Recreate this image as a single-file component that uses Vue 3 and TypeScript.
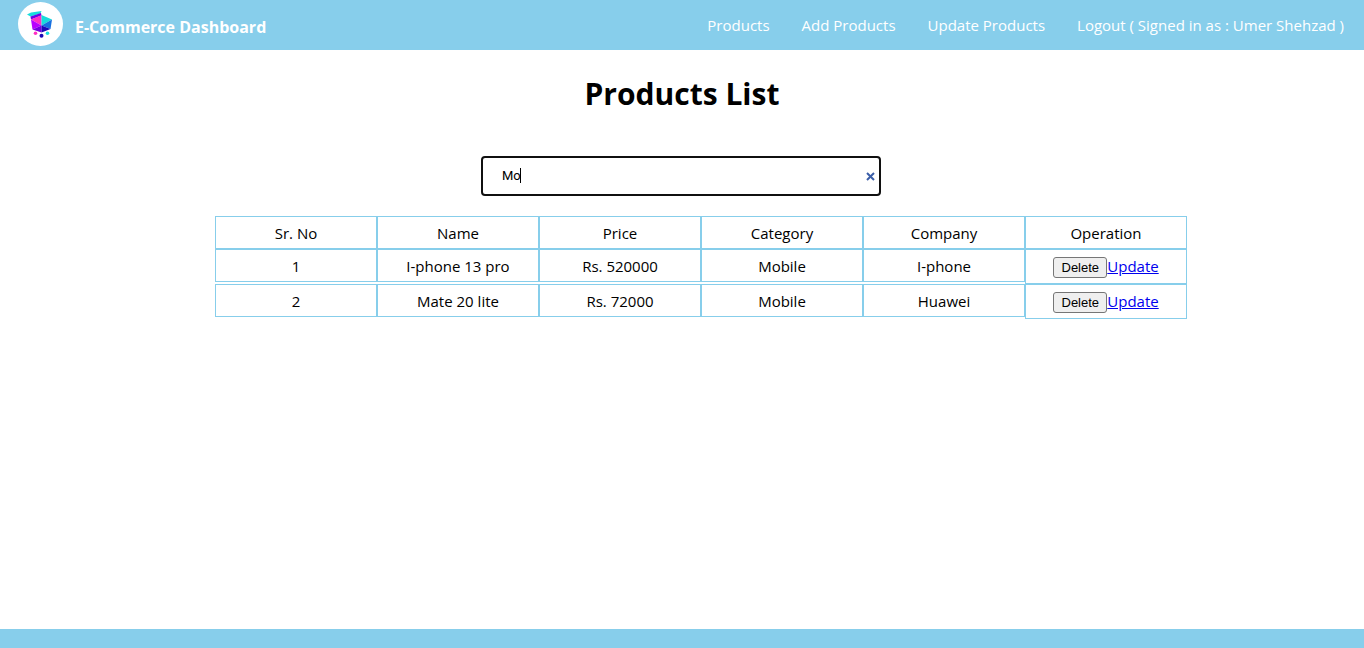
<script setup lang="ts">
import { computed, ref } from 'vue'

interface Product {
  id: number
  name: string
  price: number
  category: string
  company: string
}

const links = ['Products', 'Add Products', 'Update Products', 'Logout ( Signed in as : Umer Shehzad )']
const headings = ['Sr. No', 'Name', 'Price', 'Category', 'Company', 'Operation']
const search = ref('Mo')
const products = ref<Product[]>([
  { id: 1, name: 'I-phone 13 pro', price: 520000, category: 'Mobile', company: 'I-phone' },
  { id: 2, name: 'Mate 20 lite', price: 72000, category: 'Mobile', company: 'Huawei' },
])

const shown = computed(() => {
  const key = search.value.toLowerCase()
  return products.value.filter((p) => [p.name, p.category, p.company].some((v) => v.toLowerCase().includes(key)))
})

function remove(id: number): void {
  products.value = products.value.filter((p) => p.id !== id)
}
</script>

<template>
  <div class="page">
    <header class="bar">
      <svg class="logo" viewBox="0 0 45 44" aria-hidden="true">
        <ellipse cx="22.5" cy="22" rx="22.5" ry="22" fill="#fff" />
        <path d="M9 12.500 13 10.500 23.500 9 22.500 11.500 12.500 14.500Z" fill="#18dcdc" />
        <path d="M12.500 14.500 23 11 23.500 13.500 13 17.500Z" fill="#6a00e8" />
        <path d="M13 17.500 23.500 13 23.500 23.500Z" fill="#ff2fc4" />
        <path d="M13 17.500 23.500 23.500 14.500 27.500Z" fill="#b800ff" />
        <path d="M23.500 13 34 17.500 23.500 23.500Z" fill="#18dcdc" />
        <path d="M34 17.500 32.500 27 23.500 23.500Z" fill="#1670e0" />
        <path d="M14.500 27.500 23.500 23.500 23.500 30.500Z" fill="#7600e0" />
        <path d="M23.500 23.500 32.500 27 23.500 30.500Z" fill="#1a08b8" />
        <circle cx="17.500" cy="31.300" r="1.800" fill="#ff2fc4" />
        <circle cx="23.500" cy="33.700" r="2" fill="#1a08b8" />
        <circle cx="29.500" cy="31.300" r="1.800" fill="#18dcdc" />
      </svg>
      <span class="brand">E-Commerce Dashboard</span>
      <nav class="nav">
        <a v-for="link in links" :key="link" href="#">{{ link }}</a>
      </nav>
    </header>

    <main class="content">
      <h1>Products List</h1>
      <div class="search">
        <input v-model="search" type="text" aria-label="Search products" />
        <span class="caret" aria-hidden="true"></span>
        <button class="clear" type="button" aria-label="Clear search" @click="search = ''">
          <svg viewBox="0 0 9 9" width="9" height="9">
            <path d="M1 1 8 8M8 1 1 8" fill="none" stroke="#3b5ea8" stroke-width="2" />
          </svg>
        </button>
      </div>
      <table class="list">
        <thead>
          <tr>
            <th v-for="h in headings" :key="h" scope="col">{{ h }}</th>
          </tr>
        </thead>
        <tbody>
          <tr v-for="(p, i) in shown" :key="p.id">
            <td>{{ i + 1 }}</td>
            <td>{{ p.name }}</td>
            <td>Rs. {{ p.price }}</td>
            <td>{{ p.category }}</td>
            <td>{{ p.company }}</td>
            <td class="ops"><button type="button" @click="remove(p.id)">Delete</button><a href="#">Update</a></td>
          </tr>
        </tbody>
      </table>
    </main>
    <footer class="foot"></footer>
  </div>
</template>

<style>
body {
  margin: 0;
  background: #fff;
}
</style>

<style scoped>
.page {
  display: flex;
  flex-direction: column;
  min-height: 100vh;
  font: 16px/21px "Segoe UI", "Open Sans", "Noto Sans", sans-serif;
  color: #000;
}
.bar {
  display: flex;
  align-items: center;
  box-sizing: border-box;
  min-height: 50px;
  padding: 0 20px 0 18px;
  background: skyblue;
  color: #fff;
}
.logo {
  width: 45px;
  height: 44px;
  margin: 2px 12px 4px 0;
}
.brand {
  padding-top: 4px;
  font-size: 16px;
  font-weight: 700;
}
.nav {
  display: flex;
  flex-wrap: wrap;
  gap: 32px;
  margin-left: auto;
  font-size: 15px;
}
.nav a {
  color: #fff;
  text-decoration: none;
}
.content {
  display: flex;
  flex: 1;
  flex-direction: column;
  align-items: center;
}
h1 {
  margin: 22px 0 40px;
  font-size: 30px;
  line-height: 44px;
}
.search {
  position: relative;
  width: 400px;
  max-width: 100%;
  margin-right: 2px;
}
input {
  display: block;
  box-sizing: border-box;
  width: 100%;
  height: 40px;
  padding: 0 30px 2px 19px;
  border: 2px solid #101010;
  border-radius: 4px;
  outline: 0;
  background: #fff;
  color: #000;
  font: 13px Roboto, sans-serif;
  caret-color: transparent;
}
.caret {
  position: absolute;
  top: 12px;
  left: 39px;
  width: 1px;
  height: 15px;
  background: #000;
}
.clear {
  position: absolute;
  top: 16px;
  right: 6px;
  display: flex;
  padding: 0;
  border: 0;
  background: none;
}
.list {
  display: block;
  margin: 20px 0 20px 38px;
  font-size: 15px;
}
.list thead,
.list tbody {
  display: block;
}
.list tr {
  display: flex;
  align-items: flex-start;
}
.list th,
.list td {
  box-sizing: border-box;
  width: 162px;
  padding: 6px 5px 4px;
  border: 1px solid skyblue;
  font-weight: 400;
  text-align: center;
}
.list .ops {
  display: flex;
  justify-content: center;
  padding: 7px 5px 5px;
}
.ops button {
  width: 54px;
  height: 21px;
  padding: 0;
  border: 1px solid #767676;
  border-radius: 3px;
  background: #efefef;
  color: #000;
  font: 13px "Liberation Sans", Arial, sans-serif;
}
.ops a {
  line-height: 19px;
  color: #0000ee;
}
.foot {
  height: 19px;
  background: skyblue;
}
</style>
